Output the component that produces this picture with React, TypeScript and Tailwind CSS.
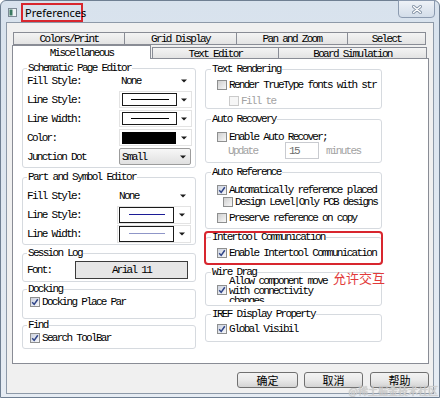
import React from "react";

const MONO =
  "font-['Liberation_Mono',monospace] text-[11px] leading-[10px] tracking-[-1.7px] text-black";

function Arrow() {
  return (
    <svg width="6" height="4" viewBox="0 0 6 4" className="block">
      <path d="M0 0.5H6L3 3.5Z" fill="#1a1a1a" />
    </svg>
  );
}

function Check({ checked = false, disabled = false }: { checked?: boolean; disabled?: boolean }) {
  return (
    <span
      className={
        "flex h-[10px] w-[10px] shrink-0 items-center justify-center border " +
        (disabled
          ? "border-[#cacaca] bg-[#f6f6f6]"
          : checked
          ? "border-[#8e8f8f] bg-gradient-to-br from-[#cdd3df] to-[#f6f7fa]"
          : "border-[#8e8f8f] bg-gradient-to-br from-[#cfcfcf] to-[#f8f8f8]")
      }
    >
      {checked && (
        <svg width="8" height="8" viewBox="0 0 8 8" className="block">
          <path d="M1.2 4.2 L3.2 6.4 L6.8 1.2" stroke="#2f4488" strokeWidth="1.5" fill="none" />
        </svg>
      )}
    </span>
  );
}

function Group({
  title,
  className = "",
  legend = "ml-[4px]",
  children,
}: {
  title: string;
  className?: string;
  legend?: string;
  children?: React.ReactNode;
}) {
  return (
    <fieldset className={"relative w-full rounded-[3px] border border-[#d6dadf] " + className}>
      <legend className={"px-[1px] leading-[10px] " + legend}>{title}</legend>
      {children}
    </fieldset>
  );
}

function LRow({ label, labelW, children }: { label: string; labelW: string; children: React.ReactNode }) {
  return (
    <div className="flex h-[19px] items-center pl-[4px]">
      <span className={"shrink-0 whitespace-nowrap " + labelW}>{label}</span>
      {children}
    </div>
  );
}

function CRow({
  checked,
  disabled,
  className = "",
  children,
}: {
  checked?: boolean;
  disabled?: boolean;
  className?: string;
  children: React.ReactNode;
}) {
  return (
    <div className={"flex h-[14px] items-center gap-[2px] whitespace-nowrap " + className}>
      <Check checked={checked} disabled={disabled} />
      <span className={disabled ? "text-[#a3a3a3]" : ""}>{children}</span>
    </div>
  );
}

function Tab({ w, label, className = "" }: { w: string; label: string; className?: string }) {
  return (
    <div
      className={
        "flex items-center justify-center border border-[#898c95] bg-gradient-to-b from-[#f4f4f4] to-[#e3e3e3] pt-[1px] " +
        w +
        " " +
        className
      }
    >
      <span className="whitespace-nowrap">{label}</span>
    </div>
  );
}

function Btn({ label, w, className = "" }: { label: string; w: string; className?: string }) {
  return (
    <div
      className={
        "flex h-[16px] items-center justify-center rounded-[3px] border border-[#707070] bg-gradient-to-b from-[#f3f3f3] via-[#e9e9e9] to-[#d4d4d4] font-['Noto_Sans_CJK_SC',sans-serif] text-[11px] leading-[11px] tracking-normal text-black " +
        w +
        " " +
        className
      }
    >
      {label}
    </div>
  );
}

export default function App() {
  return (
    <div className={"relative h-[398px] w-[440px] overflow-hidden bg-white " + MONO}>
      <div className="flex h-[398px] w-[440px] flex-col rounded-t-[6px] border border-[#6f7f92] bg-gradient-to-b from-[#d8e2ed] to-[#e6ecf3]">
        {/* Title bar */}
        <div className="flex h-[21px] items-start">
          <svg width="9" height="9" viewBox="0 0 9 9" className="ml-[7px] mt-[7px] block">
            <rect x="0.5" y="0.5" width="8" height="8" fill="#eef2f5" stroke="#7d8a96" />
            <rect x="1.5" y="1.5" width="3" height="6" fill="#3b7a62" />
          </svg>
          <div className="ml-[4px] mt-[2px] flex h-[19px] w-[62px] items-center border-2 border-[#d8262e] pl-[2px] font-['Noto_Sans',sans-serif] text-[11px] leading-[12px] tracking-normal text-black">
            Preferences
          </div>
          <div className="-mt-[1px] ml-auto mr-[4px] flex h-[18px] w-[37px] items-center justify-center rounded-b-[4px] border border-[#8c9bb0] bg-gradient-to-b from-[#eef2f7] to-[#d3dde9]">
            <svg width="10" height="9" viewBox="0 0 10 9" className="block">
              <path d="M1.5 1.5 L8.5 7.5 M8.5 1.5 L1.5 7.5" stroke="#8594a6" strokeWidth="3" strokeLinecap="round" />
              <path d="M1.5 1.5 L8.5 7.5 M8.5 1.5 L1.5 7.5" stroke="#ffffff" strokeWidth="1.3" strokeLinecap="round" />
            </svg>
          </div>
        </div>

        {/* Client area */}
        <div className="ml-[5px] flex h-[372px] w-[428px] flex-col border border-[#8d99a8] bg-[#f0f0f0] pt-[9px]">
          {/* Tab row 1 */}
          <div className="ml-[6px] flex h-[13px]">
            <Tab w="w-[112px]" label="Colors/Print" />
            <Tab w="w-[113px]" label="Grid Display" className="-ml-[1px]" />
            <Tab w="w-[112px]" label="Pan and Zoom" className="-ml-[1px]" />
            <Tab w="w-[79px]" label="Select" className="-ml-[1px]" />
          </div>
          {/* Tab row 2 */}
          <div className="ml-[5px] flex h-[13px] items-end">
            <div className="relative z-10 -mb-[1px] flex h-[14px] w-[139px] items-center justify-center border border-b-0 border-[#898c95] bg-white">
              Miscellaneous
            </div>
            <Tab w="w-[127px] h-[11px] border-b-0" label="Text Editor" className="ml-[1px]" />
            <Tab w="w-[149px] h-[11px] border-b-0" label="Board Simulation" className="-ml-[1px]" />
          </div>

          {/* Panel */}
          <div className="ml-[5px] flex h-[306px] w-[417px] border border-[#898c95] bg-white pl-[9px]">
            {/* Left column */}
            <div className="flex w-[174px] flex-col pt-[4px]">
              <Group title="Schematic Page Editor" className="h-[105px]">
                <div className="-mt-[2px]">
                  <LRow label="Fill Style:" labelW="w-[92px]">
                    <div className="flex h-[16px] w-[73px] items-center bg-white pl-[2px]">
                      <span className="flex-1">None</span>
                      <span className="flex w-[16px] justify-center">
                        <Arrow />
                      </span>
                    </div>
                  </LRow>
                  <LRow label="Line Style:" labelW="w-[92px]">
                    <div className="flex h-[17px] w-[73px] items-center border border-[#e3e3e3] pl-[2px]">
                      <div className="flex h-[13px] w-[55px] items-center justify-center border border-[#1a1a1a] bg-white">
                        <div className="h-px w-[38px] bg-black" />
                      </div>
                      <span className="flex flex-1 justify-center">
                        <Arrow />
                      </span>
                    </div>
                  </LRow>
                  <LRow label="Line Width:" labelW="w-[92px]">
                    <div className="flex h-[17px] w-[73px] items-center border border-[#e3e3e3] pl-[2px]">
                      <div className="flex h-[13px] w-[55px] items-center justify-center border border-[#1a1a1a] bg-white">
                        <div className="h-px w-[38px] bg-black" />
                      </div>
                      <span className="flex flex-1 justify-center">
                        <Arrow />
                      </span>
                    </div>
                  </LRow>
                  <LRow label="Color:" labelW="w-[92px]">
                    <div className="flex h-[17px] w-[73px] items-center border border-[#e3e3e3] pl-[2px]">
                      <div className="h-[12px] w-[54px] bg-black" />
                      <span className="flex flex-1 justify-center">
                        <Arrow />
                      </span>
                    </div>
                  </LRow>
                  <LRow label="Junction Dot" labelW="w-[92px]">
                    <div className="flex h-[17px] w-[72px] items-center rounded-[2px] border border-[#9c9c9c] bg-gradient-to-b from-[#f7f7f7] to-[#e0e0e0] pl-[2px]">
                      <span className="flex-1">Small</span>
                      <span className="flex w-[15px] justify-center">
                        <Arrow />
                      </span>
                    </div>
                  </LRow>
                </div>
              </Group>

              <Group title="Part and Symbol Editor" className="mt-[4px] h-[73px]">
                <div className="pt-[4px]">
                  <LRow label="Fill Style:" labelW="w-[90px]">
                    <div className="flex h-[16px] w-[74px] items-center bg-white pl-[2px]">
                      <span className="flex-1">None</span>
                      <span className="flex w-[16px] justify-center">
                        <Arrow />
                      </span>
                    </div>
                  </LRow>
                  <LRow label="Line Style:" labelW="w-[90px]">
                    <div className="flex h-[18px] w-[74px] items-center border border-[#e3e3e3] pl-[1px]">
                      <div className="flex h-[16px] w-[55px] items-center justify-center border border-[#1a1a1a] bg-white">
                        <div className="h-px w-[36px] bg-[#1c1c96]" />
                      </div>
                      <span className="flex flex-1 justify-center">
                        <Arrow />
                      </span>
                    </div>
                  </LRow>
                  <LRow label="Line Width:" labelW="w-[90px]">
                    <div className="flex h-[18px] w-[74px] items-center border border-[#e3e3e3] pl-[1px]">
                      <div className="flex h-[16px] w-[55px] items-center justify-center border border-[#1a1a1a] bg-white">
                        <div className="h-px w-[36px] bg-[#8f96c8]" />
                      </div>
                      <span className="flex flex-1 justify-center">
                        <Arrow />
                      </span>
                    </div>
                  </LRow>
                </div>
              </Group>

              <Group title="Session Log" className="mt-[3px] h-[34px]">
                <div className="mt-[3px] flex h-[18px] items-center pl-[4px]">
                  <span className="w-[48px] shrink-0">Font:</span>
                  <div className="flex h-[18px] w-[113px] items-center justify-center border border-[#3c3c3c] bg-[#e6e6e6]">
                    Arial 11
                  </div>
                </div>
              </Group>

              <Group title="Docking" className="mt-[2px] h-[35px]">
                <CRow checked className="mt-[1px] pl-[7px]">
                  Docking Place Par
                </CRow>
              </Group>

              <Group title="Find" className="mt-[1px] h-[29px]">
                <CRow checked className="mt-[1px] pl-[7px]">
                  Search ToolBar
                </CRow>
              </Group>
            </div>

            {/* Right column */}
            <div className="ml-[9px] flex w-[177px] flex-col pt-[5px]">
              <Group title="Text Rendering" legend="ml-[5px]" className="h-[45px]">
                <CRow className="mt-[4px] pl-[11px]">Render TrueType fonts with str</CRow>
                <CRow disabled className="mt-[2px] pl-[23px]">
                  Fill te
                </CRow>
              </Group>

              <Group title="Auto Recovery" legend="ml-[5px]" className="mt-[5px] h-[49px]">
                <CRow className="mt-[6px] pl-[11px]">Enable Auto Recover;</CRow>
                <div className="-mt-[2px] flex h-[17px] items-center pl-[22px] text-[#a3a3a3]">
                  <span className="w-[57px] shrink-0">Update</span>
                  <div className="flex h-[17px] w-[34px] items-center border border-[#c9cbd0] bg-white pl-[3px] text-[#6d6d6d]">
                    15
                  </div>
                  <span className="ml-[7px]">minutes</span>
                </div>
              </Group>

              <Group title="Auto Reference" legend="ml-[5px]" className="mt-[4px] h-[62px]">
                <CRow checked className="mt-[6px] pl-[11px]">
                  Automatically reference placed
                </CRow>
                <CRow className="-mt-[2px] pl-[17px]">Design Level|Only PCB designs</CRow>
                <CRow className="mt-[2px] pl-[11px]">Preserve reference on copy</CRow>
              </Group>

              <Group
                title="Intertool Communication"
                legend="ml-[5px]"
                className="mt-[3px] h-[32px] outline-2 outline-offset-[-1px] outline-[#d8262e] outline-solid"
              >
                <CRow checked className="mt-[4px] pl-[11px]">
                  Enable Intertool Communication
                </CRow>
              </Group>

              <Group title="Wire Drag" legend="ml-[5px]" className="mt-[3px] h-[39px]">
                <div className="-mt-[1px] flex h-[26px] items-start gap-[2px] overflow-hidden pl-[11px]">
                  <span className="mt-[9px]">
                    <Check checked />
                  </span>
                  <div className="whitespace-nowrap leading-[10px]">
                    Allow component move
                    <br />
                    with connectivity
                    <br />
                    changes
                  </div>
                </div>
                <span className="absolute left-[127px] top-[-6px] whitespace-nowrap font-['Noto_Sans_CJK_SC',sans-serif] text-[13px] leading-[13px] tracking-normal text-[#e23a3a]">
                  允许交互
                </span>
              </Group>

              <Group title="IREF Display Property" legend="ml-[5px]" className="mt-[3px] h-[33px]">
                <CRow checked className="mt-[3px] pl-[11px]">
                  Global Visibil
                </CRow>
              </Group>
            </div>
          </div>

          {/* Buttons */}
          <div className="mt-[8px] flex justify-end pr-[4px]">
            <Btn label="确定" w="w-[61px]" />
            <Btn label="取消" w="w-[59px]" className="ml-[6px]" />
            <Btn label="帮助" w="w-[59px]" className="ml-[7px]" />
          </div>
        </div>
      </div>

      <span className="absolute bottom-[2px] right-[2px] whitespace-nowrap font-['Noto_Sans_CJK_SC',sans-serif] text-[10px] leading-[11px] tracking-normal text-[#d4d4d4] [text-shadow:0_0_1px_#a0a0a0]">
        @稀土掘金技术社区
      </span>
    </div>
  );
}
